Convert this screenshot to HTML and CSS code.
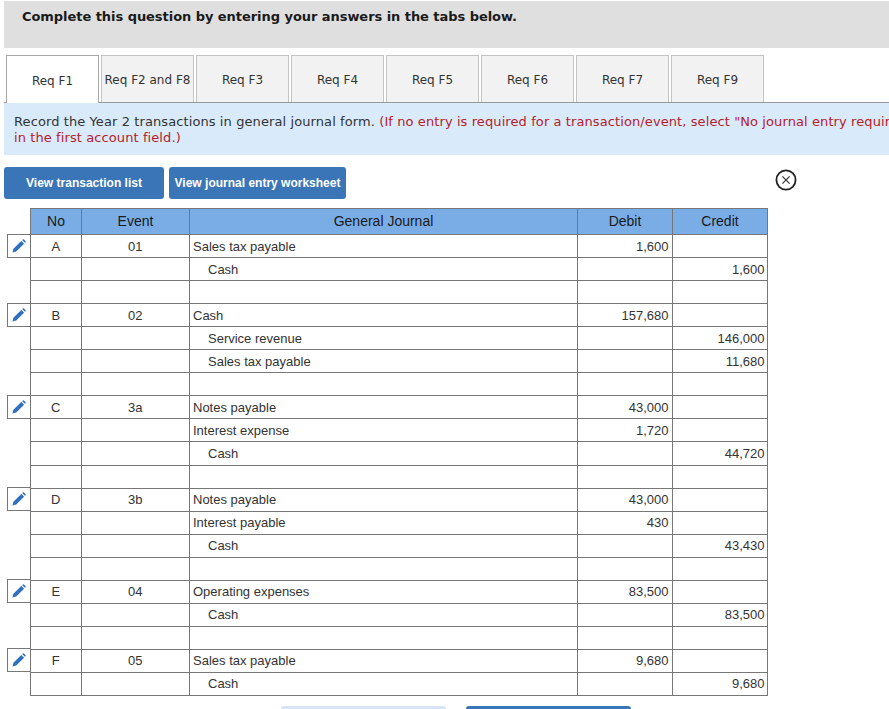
FILE: index.html
```html
<!DOCTYPE html>
<html lang="en">
<head>
<meta charset="utf-8">
<title>General Journal</title>
<link rel="stylesheet" href="styles.css">
</head>
<body>
<svg class="defs" width="0" height="0" aria-hidden="true"><defs>
<symbol id="pencil" viewBox="0 0 16 16"><path d="M0.6 15.4 L1.6 11.2 L10.6 2.2 L13.8 5.4 L4.8 14.4 Z M11.6 1.2 L12.4 0.5 Q13 0.1 13.6 0.6 L15.4 2.4 Q15.9 3 15.5 3.6 L14.8 4.4 Z" fill="#2f70c0"/></symbol>
</defs></svg>
<div class="page">
  <div class="banner">Complete this question by entering your answers in the tabs below.</div>
  <div class="tabs">
    <div class="tab active">Req F1</div>
    <div class="tab">Req F2 and F8</div>
    <div class="tab">Req F3</div>
    <div class="tab">Req F4</div>
    <div class="tab">Req F5</div>
    <div class="tab">Req F6</div>
    <div class="tab">Req F7</div>
    <div class="tab">Req F9</div>
  </div>
  <div class="note">Record the Year 2 transactions in general journal form. <span class="warn">(If no entry is required for a transaction/event, select "No journal entry required<br>in the first account field.)</span></div>
  <div class="toolbar">
    <button class="btn btn-list">View transaction list</button>
    <button class="btn btn-sheet">View journal entry worksheet</button>
    <svg class="close" viewBox="0 0 22 22" width="22" height="22" aria-label="Close"><circle cx="11" cy="11" r="9.6" fill="none" stroke="#222" stroke-width="1.8"/><path d="M7.4 7.4 L14.6 14.6 M14.6 7.4 L7.4 14.6" stroke="#333" stroke-width="1.2" fill="none"/></svg>
  </div>
  <table class="journal">
    <colgroup><col class="c-edit"><col class="c-no"><col class="c-event"><col class="c-acct"><col class="c-debit"><col class="c-credit"></colgroup>
    <thead><tr><th class="blank"></th><th>No</th><th>Event</th><th>General Journal</th><th>Debit</th><th>Credit</th></tr></thead>
    <tbody>
      <tr><td class="blank edit"><div class="penbox"><svg class="pen"><use href="#pencil"/></svg></div></td><td class="ctr">A</td><td class="ctr">01</td><td>Sales tax payable</td><td class="num">1,600</td><td class="num"></td></tr>
      <tr><td class="blank"></td><td></td><td></td><td class="ind">Cash</td><td class="num"></td><td class="num">1,600</td></tr>
      <tr><td class="blank"></td><td></td><td></td><td></td><td class="num"></td><td class="num"></td></tr>

      <tr><td class="blank edit"><div class="penbox"><svg class="pen"><use href="#pencil"/></svg></div></td><td class="ctr">B</td><td class="ctr">02</td><td>Cash</td><td class="num">157,680</td><td class="num"></td></tr>
      <tr><td class="blank"></td><td></td><td></td><td class="ind">Service revenue</td><td class="num"></td><td class="num">146,000</td></tr>
      <tr><td class="blank"></td><td></td><td></td><td class="ind">Sales tax payable</td><td class="num"></td><td class="num">11,680</td></tr>
      <tr><td class="blank"></td><td></td><td></td><td></td><td class="num"></td><td class="num"></td></tr>

      <tr><td class="blank edit"><div class="penbox"><svg class="pen"><use href="#pencil"/></svg></div></td><td class="ctr">C</td><td class="ctr">3a</td><td>Notes payable</td><td class="num">43,000</td><td class="num"></td></tr>
      <tr><td class="blank"></td><td></td><td></td><td>Interest expense</td><td class="num">1,720</td><td class="num"></td></tr>
      <tr class="tall"><td class="blank"></td><td></td><td></td><td class="ind">Cash</td><td class="num"></td><td class="num">44,720</td></tr>
      <tr><td class="blank"></td><td></td><td></td><td></td><td class="num"></td><td class="num"></td></tr>
    </tbody>
    <tbody class="lower">
      <tr><td class="blank edit"><div class="penbox raised"><svg class="pen"><use href="#pencil"/></svg></div></td><td class="ctr">D</td><td class="ctr">3b</td><td>Notes payable</td><td class="num">43,000</td><td class="num"></td></tr>
      <tr><td class="blank"></td><td></td><td></td><td>Interest payable</td><td class="num">430</td><td class="num"></td></tr>
      <tr><td class="blank"></td><td></td><td></td><td class="ind">Cash</td><td class="num"></td><td class="num">43,430</td></tr>
      <tr><td class="blank"></td><td></td><td></td><td></td><td class="num"></td><td class="num"></td></tr>

      <tr><td class="blank edit"><div class="penbox raised"><svg class="pen"><use href="#pencil"/></svg></div></td><td class="ctr">E</td><td class="ctr">04</td><td>Operating expenses</td><td class="num">83,500</td><td class="num"></td></tr>
      <tr><td class="blank"></td><td></td><td></td><td class="ind">Cash</td><td class="num"></td><td class="num">83,500</td></tr>
      <tr><td class="blank"></td><td></td><td></td><td></td><td class="num"></td><td class="num"></td></tr>

      <tr><td class="blank edit"><div class="penbox raised"><svg class="pen"><use href="#pencil"/></svg></div></td><td class="ctr">F</td><td class="ctr">05</td><td>Sales tax payable</td><td class="num">9,680</td><td class="num"></td></tr>
      <tr><td class="blank"></td><td></td><td></td><td class="ind">Cash</td><td class="num"></td><td class="num">9,680</td></tr>
    </tbody>
  </table>
  <div class="pager">
    <div class="pg pg-prev"></div>
    <div class="pg pg-next"></div>
  </div>
</div>
</body>
</html>
```
FILE: styles.css
```css
html, body { margin: 0; padding: 0; height: 709px; overflow: hidden; background: #fff; }
.defs { position: absolute; }
.page { padding-top: 1px; font-family: "Liberation Sans", Arial, sans-serif; color: #333; }
.banner {
  margin-left: 4px; height: 47px; box-sizing: border-box; padding: 8px 0 0 18px;
  background: #dfdfdf; font: bold 13px/16px "DejaVu Sans", Verdana, sans-serif; letter-spacing: -0.05px; color: #1a1a1a;
}
.tabs { display: flex; gap: 2px; margin: 7px 0 0 6px; height: 47px; }
.tab {
  width: 93px; box-sizing: border-box; border: 1px solid #c4c4c4; border-bottom: 0; padding-top: 2px;
  background: #f2f2f2; display: flex; align-items: center; justify-content: center;
  font: 12px/14px "DejaVu Sans", Verdana, sans-serif; color: #333; white-space: nowrap;
}
.tab.active { background: #fff; border-color: #a8a8a8; margin-bottom: -1px; position: relative; z-index: 1; }
.note {
  margin-left: 4px; height: 53px; box-sizing: border-box; padding: 11px 0 0 10px;
  background: #d9ebfa; border-top: 1px solid #999;
  font: 13px/16px "DejaVu Sans", Verdana, sans-serif; letter-spacing: 0.095px; color: #333; white-space: nowrap; overflow: hidden;
}
.warn { color: #b5202c; }
.toolbar { display: flex; gap: 5px; margin: 12px 0 0 4px; height: 32px; position: relative; }
.btn {
  border: 0; border-radius: 3px; background: #3a75b8; color: #fff; padding: 0;
  font: bold 12px/14px "Liberation Sans", Arial, sans-serif; height: 32px;
}
.btn-list { width: 160px; }
.btn-sheet { width: 177px; }
.close { position: absolute; left: 771px; top: 2px; }
.journal { border-collapse: collapse; table-layout: fixed; width: 760px; margin: 9px 0 0 7px; font-size: 13px; color: #333; }
.c-edit { width: 23px; }
.c-no { width: 51px; }
.c-event { width: 108px; }
.c-acct { width: 388px; }
.c-debit { width: 95px; }
.c-credit { width: 95px; }
.journal th {
  height: 26px; padding: 0 0 1px 1px; background: #7aade6; border: 1px solid #777; font-weight: normal; color: #1a1a1a; font-size: 14px; box-sizing: border-box;
}
.journal td { height: 23px; padding: 2px 3px 0 3.5px; border: 1px solid #777; line-height: 16px; white-space: nowrap; overflow: hidden; box-sizing: border-box; }
.journal td:last-child { padding-right: 2px; }
.journal .tall td { height: 24px; padding-top: 0; }
.journal .lower td { padding-top: 0; }
.journal .blank { border: 0; border-right: 1px solid #777; padding: 0; background: transparent; }
.journal th.blank { background: transparent; }
.journal .edit { position: relative; overflow: visible; }
.penbox {
  position: absolute; left: 0; top: -1px; width: 24px; height: 24px; box-sizing: border-box;
  border: 1px solid #777; padding: 4px 0 0 4px;
}
.penbox.raised { top: -2px; }
.pen { width: 14px; height: 14px; display: block; }
.ctr { text-align: center; }
.num { text-align: right; }
.journal .ind { padding-left: 18.5px; }
.pager { display: flex; gap: 20px; margin: 10px 0 0 281px; }
.pg { width: 165px; height: 20px; border-radius: 3px; }
.pg-prev { background: #d6e4f3; }
.pg-next { background: #3a75b8; }
```
